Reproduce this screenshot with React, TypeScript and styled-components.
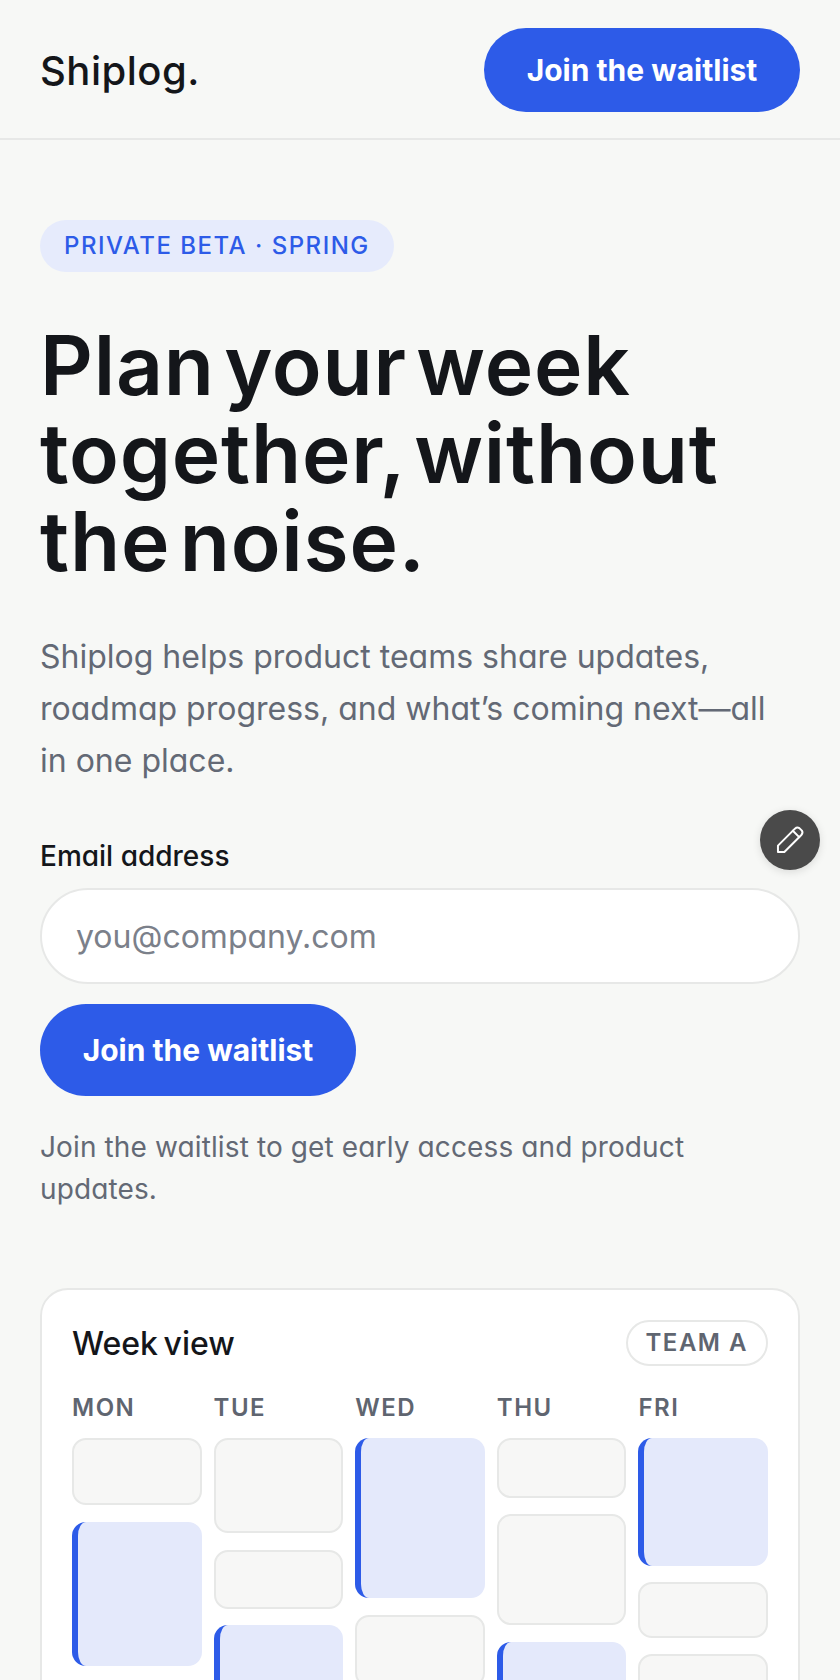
import React from 'react'
import styled, { createGlobalStyle } from 'styled-components'

const Global = createGlobalStyle`
  html, body {
    margin: 0;
    padding: 0;
    height: 1680px;
    overflow: hidden;
    background: #f7f8f6;
    font-family: Inter, "Liberation Sans", sans-serif;
  }
  * { box-sizing: border-box; }
`

const Page = styled.div`
  width: 840px;
  height: 1680px;
  overflow: hidden;
  position: relative;
`

const Header = styled.header`
  height: 140px;
  padding: 28px 40px 0;
  display: flex;
  align-items: flex-start;
  justify-content: space-between;
  border-bottom: 2px solid #e7e8e7;
`

const Logo = styled.div`
  margin-top: 18px;
  font-size: 40px;
  line-height: 50px;
  font-weight: 500;
  letter-spacing: 0.5px;
  color: #14161a;
`

const Button = styled.button<{ $large?: boolean }>`
  display: block;
  border: 0;
  padding: 0;
  width: 316px;
  height: ${p => (p.$large ? 92 : 84)}px;
  border-radius: ${p => (p.$large ? 46 : 42)}px;
  background: #2d5be8;
  color: #fff;
  font-family: inherit;
  font-size: 30px;
  font-weight: 650;
`

const Main = styled.main`
  padding: 80px 40px 0;
`

const Eyebrow = styled.div`
  display: inline-block;
  height: 52px;
  padding: 0 24px;
  border-radius: 26px;
  background: #e6ebfc;
  color: #2d5be8;
  font-size: 24px;
  line-height: 52px;
  font-weight: 500;
  letter-spacing: 1.5px;
`

const Title = styled.h1`
  margin: 50px 0 0;
  font-size: 82px;
  line-height: 88px;
  font-weight: 600;
  letter-spacing: 0.8px;
  word-spacing: -12px;
  color: #14161a;
`

const Lede = styled.p`
  margin: 45px 0 0;
  max-width: 740px;
  font-size: 32px;
  line-height: 52px;
  font-feature-settings: "cv11";
  color: #636975;
`

const Label = styled.label`
  display: block;
  margin-top: 49px;
  font-size: 28px;
  line-height: 40px;
  font-weight: 450;
  font-feature-settings: "cv11";
  color: #14161a;
`

const Input = styled.div`
  margin-top: 12px;
  height: 96px;
  border: 2px solid #e7e8e7;
  border-radius: 48px;
  background: #fff;
  padding-left: 34px;
  font-size: 32px;
  line-height: 94px;
  font-feature-settings: "cv11";
  color: #7b808a;
`

const FormButton = styled(Button)`
  margin-top: 20px;
`

const Note = styled.p`
  margin: 30px 0 0;
  max-width: 680px;
  font-size: 28px;
  line-height: 42px;
  letter-spacing: 0.12px;
  font-feature-settings: "cv11";
  color: #636975;
`

const Card = styled.section`
  margin-top: 78px;
  height: 520px;
  border: 2px solid #e7e8e7;
  border-radius: 28px;
  background: #fff;
  padding: 30px;
`

const CardHead = styled.div`
  display: flex;
  align-items: center;
  justify-content: space-between;
`

const CardTitle = styled.div`
  font-size: 32px;
  font-weight: 500;
  word-spacing: -3px;
  color: #14161a;
`

const Tag = styled.div`
  height: 46px;
  padding: 0 18px;
  border: 2px solid #e7e8e7;
  border-radius: 23px;
  font-size: 24px;
  line-height: 42px;
  font-weight: 600;
  letter-spacing: 1.5px;
  color: #5f6570;
`

const Week = styled.div`
  margin-top: 27px;
  display: grid;
  grid-template-columns: repeat(5, 1fr);
  column-gap: 12px;
`

const Day = styled.div`
  display: flex;
  flex-direction: column;
  gap: 16.5px;
`

const DayName = styled.div`
  font-size: 24px;
  line-height: 30px;
  font-weight: 600;
  letter-spacing: 1.5px;
  color: #5f6570;
  margin-bottom: -1.5px;
`

const Slot = styled.div<{ $h: number; $on?: boolean }>`
  flex: none;
  height: ${p => p.$h}px;
  border-radius: 14px;
  background: ${p => (p.$on ? '#e4e9fb' : '#f7f7f6')};
  border: ${p => (p.$on ? '0' : '2px solid #e7e8e7')};
  ${p => p.$on && 'border-left: 6px solid #2d5be8;'}
`

const Edit = styled.button`
  position: absolute;
  left: 760px;
  top: 810px;
  width: 60px;
  height: 60px;
  border: 0;
  padding: 0;
  border-radius: 50%;
  background: #4a4a4a;
  box-shadow: 0 2px 8px rgba(0, 0, 0, 0.12);
  display: flex;
  align-items: center;
  justify-content: center;
`

const days: { name: string; slots: { h: number; on?: boolean }[] }[] = [
  { name: 'MON', slots: [{ h: 67 }, { h: 144, on: true }, { h: 80 }] },
  { name: 'TUE', slots: [{ h: 95 }, { h: 59 }, { h: 120, on: true }] },
  { name: 'WED', slots: [{ h: 160, on: true }, { h: 72 }] },
  { name: 'THU', slots: [{ h: 59.5 }, { h: 111 }, { h: 100, on: true }] },
  { name: 'FRI', slots: [{ h: 127.5, on: true }, { h: 55.5 }, { h: 80 }] },
]

export default function App() {
  return (
    <Page>
      <Global />
      <Header>
        <Logo>Shiplog.</Logo>
        <Button>Join the waitlist</Button>
      </Header>
      <Main>
        <Eyebrow>PRIVATE BETA · SPRING</Eyebrow>
        <Title>Plan your week together, without the noise.</Title>
        <Lede>Shiplog helps product teams share updates, roadmap progress, and what’s coming next—all in one place.</Lede>
        <Label>Email address</Label>
        <Input>you@company.com</Input>
        <FormButton $large>Join the waitlist</FormButton>
        <Note>Join the waitlist to get early access and product updates.</Note>
        <Card>
          <CardHead>
            <CardTitle>Week view</CardTitle>
            <Tag>TEAM A</Tag>
          </CardHead>
          <Week>
            {days.map(d => (
              <Day key={d.name}>
                <DayName>{d.name}</DayName>
                {d.slots.map((s, i) => (
                  <Slot key={i} $h={s.h} $on={s.on} />
                ))}
              </Day>
            ))}
          </Week>
        </Card>
      </Main>
      <Edit aria-label="Edit">
        <svg width="34" height="34" viewBox="0 0 24 24" fill="none" stroke="#fff" strokeWidth="1.4" strokeLinejoin="round" strokeLinecap="round">
          <path d="M3.5 20.5 L3.5 16 L15.5 4 Q17 2.6 18.6 3.6 L20.4 5.4 Q21.4 7 20 8.5 L8 20.5 Z" />
          <path d="M14 5.5 L18.5 10" />
        </svg>
      </Edit>
    </Page>
  )
}
